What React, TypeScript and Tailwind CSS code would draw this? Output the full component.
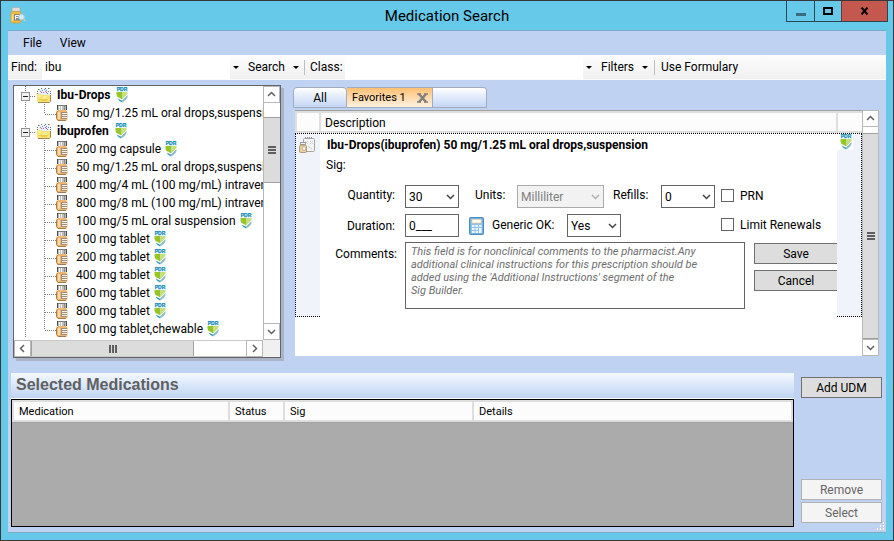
import { useState } from "react";
import type { ReactNode } from "react";
import clsx from "clsx";

type TreeItem = { label: string; covered?: boolean };
type TreeGroup = { name: string; items: TreeItem[] };

const groups: TreeGroup[] = [
  { name: "Ibu-Drops", items: [{ label: "50 mg/1.25 mL oral drops,suspension" }] },
  {
    name: "ibuprofen",
    items: [
      { label: "200 mg capsule", covered: true },
      { label: "50 mg/1.25 mL oral drops,suspension" },
      { label: "400 mg/4 mL (100 mg/mL) intravenous" },
      { label: "800 mg/8 mL (100 mg/mL) intravenous" },
      { label: "100 mg/5 mL oral suspension", covered: true },
      { label: "100 mg tablet", covered: true },
      { label: "200 mg tablet", covered: true },
      { label: "400 mg tablet", covered: true },
      { label: "600 mg tablet", covered: true },
      { label: "800 mg tablet", covered: true },
      { label: "100 mg tablet,chewable", covered: true },
    ],
  },
];

const commentHint = [
  "This field is for nonclinical comments to the pharmacist.Any",
  "additional clinical instructions for this prescription should be",
  "added using the 'Additional Instructions' segment of the",
  "Sig Builder.",
].join("\n");

function AppIcon() {
  return (
    <svg width="16" height="17" viewBox="0 0 16 17">
      <rect x="2" y="0.500" width="8" height="4" rx="1" fill="#e2ddd0" stroke="#a9a59a" strokeWidth="0.600" />
      <path d="M2 4.500h8l1 2V14q0 2-2 2H3q-2 0-2-2V6.500z" fill="#f7b93c" stroke="#d09a35" strokeWidth="0.600" />
      <path d="M2.500 7v7" stroke="#ffdf8e" strokeWidth="1.500" />
      <rect x="4" y="7" width="6" height="6.500" fill="#8b877f" />
      <path d="M5.500 12.500V8.500h3.500M5.500 10.500h3" stroke="#fff" fill="none" />
      <circle cx="11.500" cy="10" r="2.800" fill="#d3ebf6" stroke="#a9cfe0" />
      <path d="M13.500 12l2 2" stroke="#d5ccb0" strokeWidth="1.500" />
    </svg>
  );
}

function FolderIcon() {
  return (
    <svg width="16" height="16" viewBox="0 0 16 16" className="shrink-0">
      <path d="M2 8L3 3l6-2 4 2 1 5z" fill="#e9eef8" />
      <path d="M2 2.500h1.500M5 1.500h1M12 1.500h1.500M1 4.500h1M14 4.500h1M1 6.500h1M9 1.500h1M14 6.500h1" stroke="#5f7d45" />
      <path d="M4 4.500h1M6 3.500h1M8 2.500h1M10 3.500h1M12 4.500h1M7 5.500h1M11 6.500h1" stroke="#6f90da" />
      <path d="M5 5.500h1M9 4.500h1M10 5.500h1" stroke="#e0577f" />
      <path d="M1 8q0-1 1-1h3l1 1h7q1 0 1 1v5q0 1-1 1H2q-1 0-1-1z" fill="#f6e474" />
      <path d="M2 9h3M7 10h4" stroke="#fffbb8" />
      <path d="M3 12.500h9M5 13.500h6" stroke="#e9cc55" />
      <path d="M14.500 8v6.500l-1 1H2" stroke="#a3854a" fill="none" />
    </svg>
  );
}

function BottleIcon() {
  return (
    <svg width="12" height="16" viewBox="0 0 12 16" className="shrink-0">
      <rect x="1" y="0" width="10" height="5" fill="#bdbdbd" />
      <path d="M1.500 0v5M10.500 0v5" stroke="#4b4b4b" />
      <path d="M2 0.500h8" stroke="#7b7b7b" />
      <path d="M3.500 1v4M5.500 1v4" stroke="#f6f6f6" />
      <path d="M8.500 1v4" stroke="#8a8a8a" />
      <path d="M2 5h8l1.500 2v7L10 16H2L0.500 14V7z" fill="#f3b56c" />
      <path d="M1.500 6L0.500 7.500v6L2 15.500h8" fill="none" stroke="#a37a52" />
      <path d="M3 7v7" stroke="#ffdba4" strokeWidth="2" />
      <rect x="5" y="7" width="6" height="7" fill="#9d8f80" />
      <path d="M6 8.500h5M6 10.500h5M6 12.500h5" stroke="#f9f3ea" />
    </svg>
  );
}

function PdrIcon() {
  return (
    <svg width="13" height="16" viewBox="0 0 13 16" className="shrink-0">
      <text x="6" y="3.500" textAnchor="middle" fontSize="5" fontWeight="900" fill="#168dba" stroke="#168dba" strokeWidth="0.300" fontFamily="Liberation Sans, sans-serif">
        PDR
      </text>
      <path d="M0.500 5H6v7.500L2 10.500Q0.500 9 0.500 7z" fill="#96c52a" />
      <path d="M6 5h5.500v2L6 12.500z" fill="#c3e07c" />
      <path d="M11.500 8v2q-1 3-5.500 5.500v-2z" fill="#8abfc6" />
      <path d="M1.500 11.500L6 13.500v2Q3 14.500 1.500 11.500z" fill="#3da0b8" />
      <path d="M2.500 10.500L6 13l5.500-5.500" fill="none" stroke="#fff" strokeWidth="0.800" />
    </svg>
  );
}

function RxFormIcon() {
  return (
    <svg width="16" height="16" viewBox="0 0 16 16">
      <rect x="4.500" y="1.500" width="11" height="13" rx="1" fill="#f4f4f4" stroke="#a5a5a5" />
      <path d="M6 0.500h1M8 0.500h1M10 0.500h1M12 0.500h1" stroke="#8e8e8e" />
      <path d="M6 4l3 3M9 4L6 7M11 4l3 3M14 4l-3 3M9 9l4 3" stroke="#d0d0d0" />
      <rect x="1.500" y="5.500" width="5" height="2" fill="#eee" stroke="#8e8e8e" strokeWidth="0.800" />
      <path d="M1.500 8h5l1 1.500V14q0 1.500-1 1.500H1.500Q0.500 15.500 0.500 14V9.500z" fill="#f1cf98" stroke="#a18767" strokeWidth="0.800" />
      <rect x="3.500" y="10" width="3" height="3" fill="#fff" stroke="#999" strokeWidth="0.500" />
    </svg>
  );
}

function CalculatorIcon() {
  return (
    <svg width="15" height="18" viewBox="0 0 15 18">
      <rect x="0.500" y="0.500" width="14" height="17" rx="1" fill="#5b9fd4" stroke="#4a8dc4" />
      <rect x="1.500" y="1.500" width="12" height="15" fill="#8fc4ea" />
      <rect x="3" y="2.500" width="9" height="3.500" fill="#fffbe8" stroke="#eacb95" strokeWidth="0.600" />
      <path d="M3 9h2.500M6.500 9H9M10 9h2.500M3 12h2.500M6.500 12H9M3 15h2.500M6.500 15H9" stroke="#eef7fd" strokeWidth="2" />
      <path d="M10 11v5h2.500v-5z" fill="#eef7fd" />
    </svg>
  );
}

function Chevron({ dir, className }: { dir: "up" | "down" | "left" | "right"; className?: string }) {
  const paths = {
    up: "M1 6l3.500-3.500L8 6",
    down: "M1 3l3.500 3.500L8 3",
    left: "M6 1L2.500 4.500 6 8",
    right: "M3 1l3.500 3.500L3 8",
  };
  return (
    <svg width="9" height="9" viewBox="0 0 9 9" className={className}>
      <path d={paths[dir]} fill="none" stroke="currentColor" strokeWidth="1.500" />
    </svg>
  );
}

function Caret() {
  return (
    <svg width="6" height="3" viewBox="0 0 6 3">
      <path d="M0 0h6L3 3z" fill="#000" />
    </svg>
  );
}

function ScrollButton({ dir }: { dir: "up" | "down" | "left" | "right" }) {
  return (
    <button
      type="button"
      aria-label={`Scroll ${dir}`}
      className="flex size-[17px] shrink-0 items-center justify-center border border-[#b8b8b8] bg-white text-[#606060]"
    >
      <Chevron dir={dir} />
    </button>
  );
}

function Grip({ vertical }: { vertical?: boolean }) {
  return (
    <svg width="8" height="8" viewBox="0 0 8 8">
      <path d={vertical ? "M1 0v8M4 0v8M7 0v8" : "M0 1h8M0 4h8M0 7h8"} stroke="#5f5f5f" strokeWidth="2" />
    </svg>
  );
}

// dotted connector lines and the +/- box of the tree
function TreeLines({ child, last }: { child?: boolean; last?: boolean }) {
  return (
    <svg width={child ? 42 : 22} height="18" className="shrink-0" fill="none" shapeRendering="crispEdges">
      <path d="M11.500 0v18" stroke="#808080" strokeDasharray="1 1" />
      {child ? (
        <path d={last ? "M30.500 0v10M31 10.500h11" : "M30.500 0v18M31 10.500h11"} stroke="#808080" strokeDasharray="1 1" />
      ) : (
        <>
          <path d="M16 10.500h6" stroke="#808080" strokeDasharray="1 1" />
          <rect x="7.500" y="6.500" width="8" height="8" fill="#f1f1f1" stroke="#919191" />
          <path d="M9 10.500h5" stroke="#222" />
        </>
      )}
    </svg>
  );
}

function MedicationTree() {
  return (
    <div className="flex w-[268px] shrink-0 flex-col self-start border border-[#646464] bg-white shadow-[3px_3px_0_#a9b4c9]">
      <div className="flex">
        <ul className="min-w-0 flex-1 overflow-hidden pb-0.5 text-[12px] leading-[18px] whitespace-nowrap">
          {groups.map((group) => (
            <li key={group.name}>
              <div className="flex h-[18px] items-center">
                <TreeLines />
                <FolderIcon />
                <span className="mr-1.5 ml-[5px] font-bold">{group.name}</span>
                <PdrIcon />
              </div>
              <ul>
                {group.items.map((item, i) => (
                  <li key={item.label} className="flex h-[18px] items-center">
                    <TreeLines child last={i === group.items.length - 1} />
                    <BottleIcon />
                    <span className="mr-1 ml-2">{item.label}</span>
                    {item.covered && <PdrIcon />}
                  </li>
                ))}
              </ul>
            </li>
          ))}
        </ul>
        <div className="flex w-[17px] flex-col border-l border-[#b8b8b8]">
          <div className="-ml-px"><ScrollButton dir="up" /></div>
          <div className="h-3.5" />
          <div className="flex h-[66px] items-center justify-center border-y border-[#a0a0a0] bg-[#dcdcdc]">
            <Grip />
          </div>
          <div className="flex-1" />
          <div className="-ml-px"><ScrollButton dir="down" /></div>
        </div>
      </div>
      <div className="flex">
        <ScrollButton dir="left" />
        <div className="flex flex-1 border-y border-[#c8c8c8]">
          <div className="flex w-[163px] items-center justify-center border-x border-[#a0a0a0] bg-[#dcdcdc]">
            <Grip vertical />
          </div>
        </div>
        <ScrollButton dir="right" />
        <div className="w-[17px] bg-[#f0f0f0]" />
      </div>
    </div>
  );
}

function Select({ id, options, disabled, className }: { id: string; options: string[]; disabled?: boolean; className: string }) {
  return (
    <div className={clsx("relative h-[23px] shrink-0", className)}>
      <select
        id={id}
        disabled={disabled}
        className={clsx(
          "size-full appearance-none border pl-[3px] text-[12px] opacity-100",
          disabled ? "border-[#ababab] bg-[#f2f2f2] text-[#808080]" : "border-[#646464] bg-white text-black"
        )}
      >
        {options.map((o) => (
          <option key={o}>{o}</option>
        ))}
      </select>
      <Chevron
        dir="down"
        className={clsx("pointer-events-none absolute top-[7px] right-1", disabled ? "text-[#b0b0b0]" : "text-[#444]")}
      />
    </div>
  );
}

function Check({ id, children }: { id: string; children: ReactNode }) {
  return (
    <span className="flex items-center gap-1.5 pb-0.5">
      <input id={id} type="checkbox" className="size-[13px] appearance-none border border-[#646464] bg-white checked:bg-[#646464]" />
      <label htmlFor={id}>{children}</label>
    </span>
  );
}

function PrescriptionForm() {
  return (
    <form className="flex min-w-0 flex-1 flex-col overflow-hidden text-[12px] leading-4" onSubmit={(e) => e.preventDefault()}>
      <h2 className="mt-[3px] ml-[7px] font-bold whitespace-nowrap">
        Ibu-Drops(ibuprofen) 50 mg/1.25 mL oral drops,suspension
      </h2>
      <p className="mt-1 ml-1.5">Sig:</p>
      <div className="mt-3 flex items-center">
        <label htmlFor="quantity" className="w-[85px] pr-2.5 pb-1 text-right">Quantity:</label>
        <Select id="quantity" options={["30", "60"]} className="w-[54px]" />
        <label htmlFor="units" className="w-[58px] pb-1 pl-4">Units:</label>
        <Select id="units" options={["Milliliter"]} disabled className="w-[87px]" />
        <label htmlFor="refills" className="w-[57px] pb-1 pl-[9px]">Refills:</label>
        <Select id="refills" options={["0", "1", "2"]} className="mr-1.5 w-[54px]" />
        <Check id="prn">PRN</Check>
      </div>
      <div className="mt-1.5 flex items-center">
        <label htmlFor="duration" className="w-[85px] pr-2.5 text-right">Duration:</label>
        <input
          id="duration"
          defaultValue="0___"
          className="h-[23px] w-[54px] border border-[#646464] px-[3px]"
        />
        <button type="button" aria-label="Calculate duration" className="ml-2.5">
          <CalculatorIcon />
        </button>
        <label htmlFor="generic" className="w-[83px] pb-0.5 pl-2">Generic OK:</label>
        <Select id="generic" options={["Yes", "No"]} className="mr-[100px] w-[54px]" />
        <Check id="limit">Limit Renewals</Check>
      </div>
      <div className="mt-[5px] flex items-start">
        <label htmlFor="comments" className="mt-1 w-[85px] pr-2 text-right">Comments:</label>
        <textarea
          id="comments"
          placeholder={commentHint}
          className="h-[67px] w-[340px] resize-none overflow-hidden border border-[#646464] px-[5px] py-0.5 text-[11px] leading-[13px] whitespace-pre italic placeholder:text-[#6d6d6d]"
        />
        <div className="mt-px ml-[9px] flex min-w-0 flex-1 flex-col gap-1.5">
          <button type="submit" className="h-[21px] border border-r-0 border-[#707070] bg-[#dddddd]">Save</button>
          <button type="button" className="h-[21px] border border-r-0 border-[#707070] bg-[#dddddd]">Cancel</button>
        </div>
      </div>
    </form>
  );
}

function FavoritesPanel() {
  const [tab, setTab] = useState("fav");
  const idle = "bg-linear-to-b from-white to-[#c3d5f4]";
  const active = "bg-linear-to-b from-[#ffc070] to-[#fff1e0]";
  return (
    <section className="mb-0.5 flex min-w-0 flex-1 flex-col pt-0.5">
      <div className="flex h-[21px] text-[11px]">
        <button
          type="button"
          onClick={() => setTab("all")}
          className={clsx("w-[54px] rounded-t-sm border border-[#a3acbf] text-[12px]", tab === "all" ? active : idle)}
        >
          All
        </button>
        <div className={clsx("flex w-[86px] items-center justify-between border-y border-r border-[#a3acbf] pr-1 pl-[5px]", tab === "fav" ? active : idle)}>
          <button type="button" onClick={() => setTab("fav")} className="pt-0.5 whitespace-nowrap">Favorites 1</button>
          <button type="button" aria-label="Close tab">
            <svg width="11" height="10" viewBox="0 0 11 10">
              <path d="M2 1l7 8M9 1L2 9" stroke="#808080" strokeWidth="2.500" />
              <path d="M0 1h4M7 1h4M0 9h4M7 9h4" stroke="#808080" strokeWidth="1.500" />
            </svg>
          </button>
        </div>
        <button type="button" aria-label="New tab" className={clsx("w-[54px] rounded-tr-sm border-y border-r border-[#a3acbf]", idle)} />
      </div>

      <div className="mt-0.5 ml-0.5 flex flex-1 bg-white">
        <div className="flex min-w-0 flex-1 flex-col border-t border-[#a0a0a0]">
          <div className="flex h-[22px] border-y-2 border-l-2 border-[#dedede] bg-[#fcfcfc] text-[12px] leading-[20px]">
            <div className="w-6 border-r-2 border-[#dedede]" />
            <div className="flex-1 border-r-2 border-[#dedede] pl-1">Description</div>
            <div className="w-6" />
          </div>
          <div className="flex border-t border-dotted border-black">
            <div className="h-[183px] w-[25px] shrink-0 border-b border-l border-dotted border-black bg-[#f0f4fa] pt-[3px] pl-[3px]">
              <RxFormIcon />
            </div>
            <PrescriptionForm />
            <div className="h-[183px] w-[25px] shrink-0 border-r border-b border-dotted border-black bg-[#f0f4fa]">
              <div className="w-4 bg-white pl-[3px]">
                <PdrIcon />
              </div>
            </div>
          </div>
        </div>
        <div className="flex w-[17px] flex-col border-x border-[#b8b8b8]">
          <div className="-mx-px"><ScrollButton dir="up" /></div>
          <div className="h-1.5" />
          <div className="flex flex-1 items-center justify-center border-y border-[#a0a0a0] bg-[#dcdcdc]">
            <Grip />
          </div>
          <div className="-mx-px"><ScrollButton dir="down" /></div>
        </div>
      </div>
    </section>
  );
}

function SelectedMedications() {
  const th = "border-r-2 border-[#dedede] pt-0.5 pl-[5px] text-left font-normal";
  const action = "h-[21px] border text-[12px] leading-4";
  return (
    <div className="mt-[15px] flex flex-1 gap-[7px] pr-1 pb-[5px] pl-[3px]">
      <section className="flex min-w-0 flex-1 flex-col">
        <h2 className="h-[26px] border-b border-white bg-linear-to-b from-[#f4f9ff] to-[#c0d4f3] pl-[5px] font-['Liberation_Sans',Arial,sans-serif] text-[16px] leading-[23px] font-bold text-[#606060]">
          Selected Medications
        </h2>
        <div className="flex-1 border border-black bg-[#ababab]">
          <table className="w-full table-fixed border-separate border-spacing-0 border-b border-[#a0a0a0] bg-[#fcfcfc] text-[11px]">
            <thead>
              <tr className="h-[22px] leading-4 [&>th]:border-y-2">
                <th className={clsx(th, "w-[218px] border-l-2")}>Medication</th>
                <th className={clsx(th, "w-[55px]")}>Status</th>
                <th className={clsx(th, "w-[189px]")}>Sig</th>
                <th className={clsx(th, "border-r")}>Details</th>
              </tr>
            </thead>
          </table>
        </div>
      </section>
      <div className="relative flex w-[81px] flex-col pt-1 pb-1">
        <button type="button" className={clsx(action, "border-[#707070] bg-[#dddddd]")}>Add UDM</button>
        <div className="flex-1" />
        <button type="button" disabled className={clsx(action, "mb-0.5 border-[#b0b2b5] bg-[#f4f4f4] text-[#666]")}>Remove</button>
        <button type="button" disabled className={clsx(action, "border-[#b0b2b5] bg-[#f4f4f4] text-[#666]")}>Select</button>
        <svg width="9" height="9" viewBox="0 0 9 9" className="absolute -right-0.5 -bottom-1">
          <path d="M7 1h2M4 4h2M7 4h2M1 7h2M4 7h2M7 7h2" stroke="#fff" strokeWidth="2" />
          <path d="M7 1h1M4 4h1M7 4h1M1 7h1M4 7h1M7 7h1" stroke="#a9a9a9" strokeWidth="1" />
        </svg>
      </div>
    </div>
  );
}

function Toolbar() {
  return (
    <div className="flex h-[25px] items-center border-b border-[#fbfbfb] bg-linear-to-b from-[#fdfdfd] to-[#f0f0f0] pl-[3px] text-[12px] whitespace-nowrap">
      <label htmlFor="find" className="w-[31px]">Find:</label>
      <input id="find" defaultValue="ibu" className="h-full w-[188px] bg-white px-[3px]" />
      <button type="button" aria-label="Search history" className="flex h-full w-[11px] items-center justify-center">
        <Caret />
      </button>
      <button type="button" className="ml-[7px] flex w-[51px] items-center justify-between">
        Search <Caret />
      </button>
      <div className="mx-[5px] h-[15px] w-px bg-[#bdbdbd]" />
      <label htmlFor="class" className="w-[35px]">Class:</label>
      <input id="class" className="h-full w-[238px] bg-white px-[3px]" />
      <button type="button" aria-label="Class list" className="flex h-full w-[11px] items-center justify-center">
        <Caret />
      </button>
      <button type="button" className="ml-[7px] flex w-[47px] items-center justify-between">
        Filters <Caret />
      </button>
      <div className="mx-1.5 h-[15px] w-px bg-[#bdbdbd]" />
      <button type="button">Use Formulary</button>
    </div>
  );
}

export default function App() {
  return (
    <div className="flex min-h-screen flex-col border border-[#37373b] bg-[#66c9ea] px-[7px] pb-[7px] font-[Roboto,'Segoe_UI',sans-serif] text-black">
      <header className="relative flex h-[29px] items-start justify-between">
        <div className="mt-1.5 ml-0.5">
          <AppIcon />
        </div>
        <h1 className="pointer-events-none absolute inset-x-0 text-center text-[15px] leading-[31px]">Medication Search</h1>
        <div className="-mr-0.5 flex h-[21px] border-x border-b border-[#2c4650]">
          <button type="button" aria-label="Minimize" className="flex w-[27px] items-center justify-center">
            <span className="mt-1.5 h-[3px] w-2.5 bg-[#3a6c7d]" />
          </button>
          <button type="button" aria-label="Maximize" className="flex w-[27px] items-center justify-center border-l border-[#2c4650]">
            <span className="h-2 w-2.5 border-2 border-black" />
          </button>
          <button type="button" aria-label="Close" className="flex w-[46px] items-center justify-center border-l border-[#6b3a36] bg-[#c4584e]">
            <svg width="9" height="8" viewBox="0 0 9 8">
              <path d="M1.500 0.500l6 7M7.500 0.500l-6 7" stroke="#000" strokeWidth="2" />
            </svg>
          </button>
        </div>
      </header>

      <main className="flex flex-1 flex-col border-y border-[#7faac6] bg-[#c0d2f2]">
        <nav className="flex h-6 items-center gap-[18px] pl-[15px] text-[12px]">
          <button type="button">File</button>
          <button type="button">View</button>
        </nav>
        <Toolbar />
        <div className="flex gap-3 pt-[5px] pr-[7px] pl-[5px]">
          <MedicationTree />
          <FavoritesPanel />
        </div>
        <SelectedMedications />
      </main>
    </div>
  );
}
